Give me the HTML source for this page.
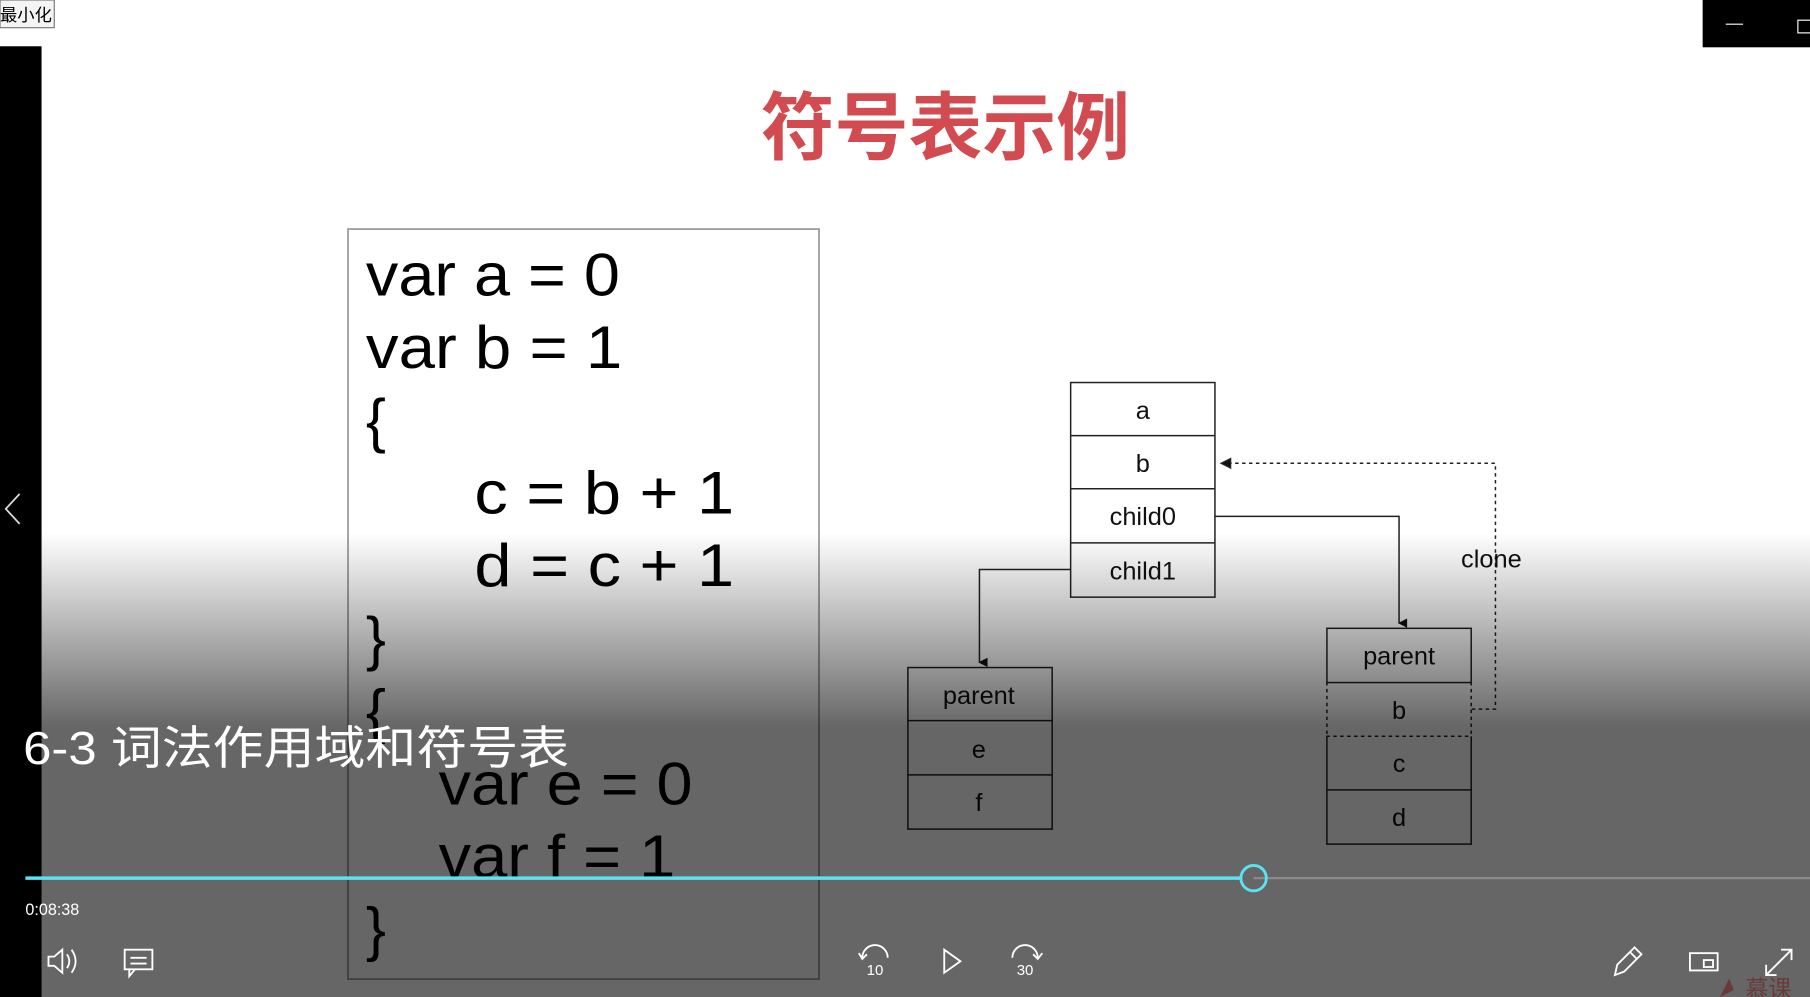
<!DOCTYPE html>
<html><head><meta charset="utf-8"><style>
html,body{margin:0;padding:0;background:#fff;overflow:hidden}
svg{display:block}
text{font-family:"Liberation Sans","Noto Sans CJK SC",sans-serif}
</style></head><body>
<svg width="1810" height="997" viewBox="0 0 1568 864" preserveAspectRatio="none" xmlns="http://www.w3.org/2000/svg">
<defs>
<linearGradient id="g" x1="0" y1="0" x2="0" y2="1">
<stop offset="0" stop-color="#000" stop-opacity="0"/>
<stop offset="1" stop-color="#000" stop-opacity="0.6"/>
</linearGradient>
<marker id="ar" markerWidth="10" markerHeight="10" refX="5" refY="8" orient="auto" markerUnits="userSpaceOnUse">
<path d="M1,1 L5,9 L9,1 Z" fill="#111"/>
</marker>
</defs>
<rect width="1568" height="864" fill="#fff"/>
<text x="819" y="133" text-anchor="middle" font-size="64" font-weight="bold" fill="#d24b50" style="font-family:'Noto Sans CJK SC',sans-serif">符号表示例</text>
<rect x="301.5" y="198.5" width="408" height="650" fill="none" stroke="#999" stroke-width="1.5"/>
<g font-size="52" fill="#000">
<text x="317" y="256" textLength="220" lengthAdjust="spacingAndGlyphs">var a = 0</text>
<text x="317" y="319" textLength="222" lengthAdjust="spacingAndGlyphs">var b = 1</text>
<text x="317" y="382">{</text>
<text x="411" y="445" textLength="225" lengthAdjust="spacingAndGlyphs">c = b + 1</text>
<text x="411" y="508" textLength="225" lengthAdjust="spacingAndGlyphs">d = c + 1</text>
<text x="317" y="571">}</text>
<text x="317" y="634">{</text>
<text x="380" y="697" textLength="220" lengthAdjust="spacingAndGlyphs">var e = 0</text>
<text x="380" y="760" textLength="205" lengthAdjust="spacingAndGlyphs">var f = 1</text>
<text x="317" y="823">}</text>
</g>
<g fill="none" stroke="#222" stroke-width="1.3">
<rect x="927.5" y="331.5" width="125" height="186"/>
<line x1="927" y1="377.5" x2="1052" y2="377.5"/>
<line x1="927" y1="423.5" x2="1052" y2="423.5"/>
<line x1="927" y1="470.5" x2="1052" y2="470.5"/>
<rect x="786.5" y="578.5" width="125" height="140"/>
<line x1="786" y1="624.5" x2="911" y2="624.5"/>
<line x1="786" y1="671.5" x2="911" y2="671.5"/>
<rect x="1149.5" y="544.5" width="125" height="47"/>
<line x1="1149.5" y1="591" x2="1149.5" y2="638" stroke-dasharray="3,3"/>
<line x1="1274.5" y1="591" x2="1274.5" y2="638" stroke-dasharray="3,3"/>
<line x1="1149" y1="638" x2="1275" y2="638" stroke-dasharray="3,3"/>
<path d="M1149.5,638 V731.5 H1274.5 V638"/>
<line x1="1149" y1="684.5" x2="1275" y2="684.5"/>
<path d="M1052,447.5 H1212 V540" marker-end="url(#ar)"/>
<path d="M927,493.5 H848.5 V574" marker-end="url(#ar)"/>
<path d="M1275,614.5 H1295.5 V401.5 H1058" stroke-dasharray="3,3"/>
<path d="M1058,401.5 l8,-4 v8 z" fill="#111"/>
</g>
<g font-size="22" fill="#111" text-anchor="middle">
<text x="990" y="363">a</text>
<text x="990" y="409">b</text>
<text x="990" y="455">child0</text>
<text x="990" y="502">child1</text>
<text x="848" y="610">parent</text>
<text x="848" y="657">e</text>
<text x="848" y="703">f</text>
<text x="1212" y="576">parent</text>
<text x="1212" y="623">b</text>
<text x="1212" y="669">c</text>
<text x="1212" y="716">d</text>
<text x="1292" y="492">clone</text>
</g>
<rect x="0" y="462" width="1568" height="168" fill="url(#g)"/>
<rect x="0" y="630" width="1568" height="234" fill="#000" fill-opacity="0.6"/>
<rect x="0" y="40" width="36" height="824" fill="#000"/>
<rect x="0" y="0" width="53" height="40" fill="#fff"/>
<rect x="0" y="0" width="47" height="24" fill="#f4f4f4" stroke="#777" stroke-width="1"/>
<text x="0" y="18" font-size="15" fill="#000">最小化</text>
<path d="M17,428 L5,441 L17,454" fill="none" stroke="#ddd" stroke-width="1.5"/>
<rect x="1475" y="0" width="93" height="41" fill="#000"/>
<line x1="1495" y1="21" x2="1510" y2="21" stroke="#fff" stroke-width="1"/>
<rect x="1557.5" y="17.5" width="11" height="11" fill="none" stroke="#fff"/>
<text x="20" y="662" font-size="40" fill="#fff" textLength="473" lengthAdjust="spacingAndGlyphs">6-3 词法作用域和符号表</text>
<line x1="1086" y1="761" x2="1568" y2="761" stroke="#8a8a8a" stroke-width="2"/>
<line x1="22" y1="761" x2="1075" y2="761" stroke="#5ce1f0" stroke-width="3"/>
<circle cx="1086" cy="761" r="11" fill="none" stroke="#5ce1f0" stroke-width="2.5"/>
<text x="22" y="793" font-size="14" fill="#fff">0:08:38</text>
<g fill="none" stroke="#fff" stroke-width="1.6">
<path d="M42,829 h5 l7,-6 v20 l-7,-6 h-5 z"/>
<path d="M58,827 q4,6 0,12 M62,823 q7,10 0,20"/>
<rect x="108" y="823" width="24" height="17"/>
<path d="M112,840 v6 l5,-6"/>
<line x1="113" y1="830" x2="127" y2="830"/><line x1="113" y1="835" x2="127" y2="835"/>
<path d="M747,830 a11,11 0 1 1 22,0"/><path d="M744,826 l3,5 l4,-4"/>
<path d="M818,823 v20 l14,-10 z"/>
<path d="M877,830 a11,11 0 1 1 22,0"/><path d="M903,826 l-4,5 l-4,-4"/>
<path d="M1399,845 l2,-9 l15,-15 l6,6 l-15,15 z M1412,825 l6,6"/>
<rect x="1464" y="826" width="24" height="15"/>
<rect x="1476" y="832" width="8" height="6"/>
<path d="M1530,845 l22,-22 M1530,836 v9 h9 M1552,832 v-9 h-9"/>
</g>
<g font-size="13" fill="#fff" text-anchor="middle">
<text x="758" y="845">10</text>
<text x="888" y="845">30</text>
</g>
<path d="M1490,864 l8,-16 l4,10 z" fill="#6a3a3a"/>
<text x="1512" y="864" font-size="20" fill="#6a3a3a" style="font-family:'Noto Sans CJK SC',sans-serif">慕课</text>
</svg>
</body></html>
